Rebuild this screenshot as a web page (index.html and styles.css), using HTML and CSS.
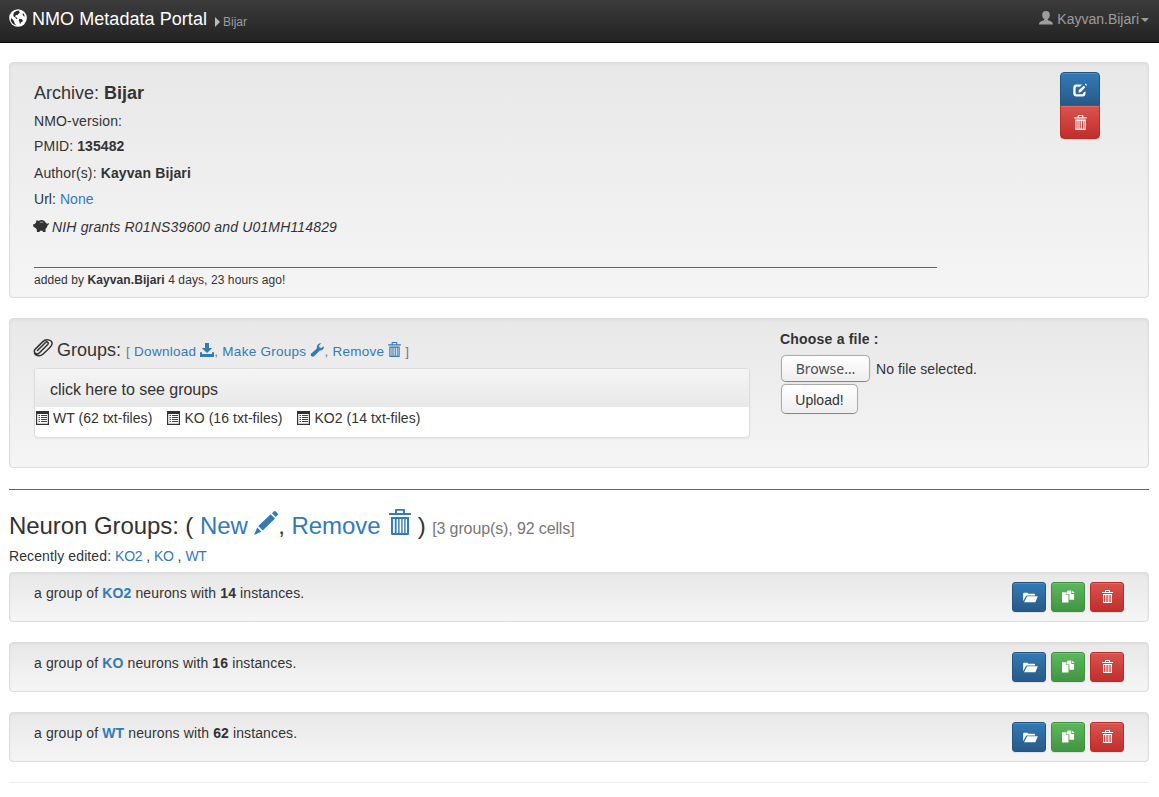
FILE: index.html
```html
<!DOCTYPE html>
<html lang="en">
<head>
<meta charset="utf-8">
<title>NMO Metadata Portal</title>
<link rel="stylesheet" href="styles.css">
</head>
<body>
<svg class="sprite" aria-hidden="true">
  <symbol id="globe" viewBox="0 0 18 18"><circle cx="9" cy="9" r="8.8" fill="#fff"/><path fill="#2c2c2c" d="M10.500 1.500 7.500 2 5 3.500 4.200 6l.6 1.800 1.700.7.600 1.500 1.300-.200-.6-1.300L6.500 8l-.1-1.500L8 5.800l.8.8.4-1.700 1.700-1.200-.8-.9zM2 9l1.500 1.200L5 12l.7 2.500L7.500 16.500 4 15 1.800 12zM10.500 9.800l1.800.1 1.500 1.200-.4 1.600-1.300.6-.7 1.400-.8-.2-.1-1.800-.8-1.100zM14 4l1.300 1.800.4 1.900-1.200-.7-1-1.500z"/></symbol>
  <symbol id="user" viewBox="0 0 14 14"><path d="M7 0C4.400 0 3.200 1.500 3.200 3.900c0 1.900.8 3.300 2 4.100v1.100C3 10.200.2 10.500 0 13.500h14c-.2-3-3-3.300-5.200-4.400V8c1.200-.8 2-2.200 2-4.100C10.800 1.500 9.600 0 7 0z"/></symbol>
  <symbol id="edit" viewBox="0 0 14 14"><path d="M9 1.600H3.300Q.3 1.600.3 4.600v5.900q0 3 3 3h6.200q3 0 3-3V8.200l-2.200 1.600q0 1.500-1.400 1.500H4Q2.600 11.300 2.600 9.900V5.200q0-1.400 1.400-1.400h3z"/><path d="m5.500 9.700.3-2.600 5-4.300 1.500 1.500L8 9.100zM11.700 1.300l.9-.9 1.400 1.400-.6 1.100z"/></symbol>
  <symbol id="trash" viewBox="0 0 22 26"><path fill-rule="evenodd" d="M6 4V1q0-1 1-1h8q1 0 1 1v3h6v2H0V4zm2 0h6V1.800H8zM2 8h18v17q0 1-1 1H3q-1 0-1-1zm2 2v14h1.800V10zm3.600 0v14h1.600V10zm3 0v14h1.600V10zm3 0v14h1.600V10zm3 0v14H18V10z"/></symbol>
  <symbol id="piggy" viewBox="0 0 16 12"><path d="M0 4.500 1.700 4 3 2.500 3.600 0l2 .9C7-.2 10-.2 11.500 1l1.700 2.300 1.300.5 1-.8.500 1-1.500 1.400-.5 1.800-1.500 1.800V12H10l-.5-1.200H7L6.500 12H4l-.3-2.700L2 7.600.5 7z"/><path d="M6.800 2.200h3.400" stroke="#ccc" stroke-width=".7"/></symbol>
  <symbol id="clip" viewBox="0 0 20 18"><path fill="none" stroke="#333" stroke-width="1.500" stroke-linecap="round" d="m4.500 11.500 8-8c1.600-1.500 3.700.4 2.200 2.100l-8.200 8.100c-3 3-7.200-.6-4.200-3.600l7.500-7.500C13-.6 21 .6 18.600 6.200c-.7 1.500-7.200 7.600-8.800 9.100-2.700 2.500-7.200 1.600-8.300-.8"/></symbol>
  <symbol id="download" viewBox="0 0 14 14"><path d="M5 0h4v5h3.300L7 10 1.700 5H5zM0 9.300h2v1.700h10V9.300h2V14H0z"/></symbol>
  <symbol id="wrench" viewBox="0 0 14 14"><path d="M13.700 3.300c.6 2.200-1.200 4.600-3.800 4.200L4.300 13c-2 2-4.600-.5-3.100-2.400l5.700-5.200C6.400 2.300 8.500 0 11.300.3L9 2.500l.4 1.900 2 .6z"/></symbol>
  <symbol id="list" viewBox="0 0 13 14"><path fill="#333" fill-rule="evenodd" d="M0 0h13v14H0zm1.200 3v9.800h10.600V3z"/><path stroke="#444" d="M2.500 4.500H4M5 4.500h6M2.500 6.500H4M5 6.500h6M2.500 8.500H4M5 8.500h6M2.500 10.500H4M5 10.500h6"/></symbol>
  <symbol id="pencil" viewBox="0 0 24 24"><path d="M18 2.300 20 .3q.8-.6 1.500 0l2.200 2.300q.6.8 0 1.500l-2 2zM16.700 3.200l4.400 4.400L8.800 19.500l-4.600-4.400zM3.200 16.500l4.200 4.200L0 24z"/></symbol>
  <symbol id="folder" viewBox="0 0 16 12"><path d="M0 10V1.800Q0 .7 1 .7h3.500l1.200 1.200H12q1 0 1 1.200v.7H4q-.8 0-1.100.7z"/><path d="M4.400 4.700H16l-2.700 6.600H1z"/></symbol>
  <symbol id="copy" viewBox="0 0 14 13"><path d="M0 2h4.200v3H7v8H0zm5-.2L5 2v2h2.400l.6.700V10h5V3.800h-3V0H6.200zM11 0v2.800h2.500zM4.800 2v2.400H7z"/></symbol>
</svg>

<header class="navbar">
  <a class="brand"><svg class="i-globe"><use href="#globe"/></svg><span class="brand-name">NMO Metadata Portal</span><span class="crumb">Bijar</span></a>
  <a class="account"><svg class="i-user"><use href="#user"/></svg><span class="account-name">Kayvan.Bijari</span><span class="caret"></span></a>
</header>

<main class="page">
  <section class="well archive">
    <div class="archive-info">
      <div class="title">Archive: <b>Bijar</b></div>
      <div class="version">NMO-version:</div>
      <div class="pmid">PMID: <b>135482</b></div>
      <div class="author">Author(s): <b>Kayvan Bijari</b></div>
      <div class="url">Url: <a>None</a></div>
      <div class="grant"><svg class="i-piggy"><use href="#piggy"/></svg><i>NIH grants R01NS39600 and U01MH114829</i></div>
      <div class="added">added by <b>Kayvan.Bijari</b> 4 days, 23 hours ago!</div>
    </div>
    <div class="btn-stack">
      <button class="btn primary"><svg class="i-edit"><use href="#edit"/></svg></button>
      <button class="btn danger"><svg class="i-trash"><use href="#trash"/></svg></button>
    </div>
  </section>

  <section class="well groups">
    <div class="groups-main">
      <div class="groups-head">
        <svg class="i-clip"><use href="#clip"/></svg><span class="groups-title">Groups:</span>
        <small>[ <a>Download <svg class="i-dl"><use href="#download"/></svg></a>, <a>Make Groups <svg class="i-dl"><use href="#wrench"/></svg></a>, <a>Remove <svg class="i-tr"><use href="#trash"/></svg></a> ]</small>
      </div>
      <div class="panel">
        <div class="panel-head">click here to see groups</div>
        <div class="panel-body">
          <span><svg class="i-list"><use href="#list"/></svg>WT (62 txt-files)</span>
          <span><svg class="i-list"><use href="#list"/></svg>KO (16 txt-files)</span>
          <span><svg class="i-list"><use href="#list"/></svg>KO2 (14 txt-files)</span>
        </div>
      </div>
    </div>
    <form class="upload">
      <label>Choose a file :</label>
      <div class="file"><button type="button" class="native browse">Browse…</button><span>No file selected.</span></div>
      <button type="button" class="native send">Upload!</button>
    </form>
  </section>

  <hr class="rule">
  <h3 class="heading">Neuron Groups: ( <a>New <svg class="i-pencil"><use href="#pencil"/></svg></a>, <a>Remove <svg class="i-bigtrash"><use href="#trash"/></svg></a> ) <small>[3 group(s), 92 cells]</small></h3>
  <div class="recent"><span>Recently edited:</span> <a>KO2</a> , <a>KO</a> , <a>WT</a></div>

  <section class="well row">
    <span>a group of <a><b>KO2</b></a> neurons with <b>14</b> instances.</span>
    <div class="actions"><button class="btn primary"><svg class="i-folder"><use href="#folder"/></svg></button><button class="btn success"><svg class="i-copy"><use href="#copy"/></svg></button><button class="btn danger"><svg class="i-smtrash"><use href="#trash"/></svg></button></div>
  </section>
  <section class="well row">
    <span>a group of <a><b>KO</b></a> neurons with <b>16</b> instances.</span>
    <div class="actions"><button class="btn primary"><svg class="i-folder"><use href="#folder"/></svg></button><button class="btn success"><svg class="i-copy"><use href="#copy"/></svg></button><button class="btn danger"><svg class="i-smtrash"><use href="#trash"/></svg></button></div>
  </section>
  <section class="well row">
    <span>a group of <a><b>WT</b></a> neurons with <b>62</b> instances.</span>
    <div class="actions"><button class="btn primary"><svg class="i-folder"><use href="#folder"/></svg></button><button class="btn success"><svg class="i-copy"><use href="#copy"/></svg></button><button class="btn danger"><svg class="i-smtrash"><use href="#trash"/></svg></button></div>
  </section>
  <hr class="end">
</main>
</body>
</html>
```
FILE: styles.css
```css
* { box-sizing: border-box; }
body { margin: 0; background: #fff; color: #333; font: 14px/20px "Liberation Sans", Arial, sans-serif; }
a { color: #337ab7; text-decoration: none; }
svg { fill: currentColor; flex: none; }
.sprite { position: absolute; width: 0; height: 0; }

.navbar { display: flex; justify-content: space-between; height: 43px; padding: 0 10px 0 9px; background: linear-gradient(#3c3c3c, #222); border-bottom: 1px solid #080808; }
.brand, .account { display: flex; height: 38px; align-items: center; }
.i-globe { width: 18px; height: 18px; margin: -3px 5px 0 0; }
.brand-name { color: #fff; font-size: 18px; letter-spacing: .05px; }
.crumb { display: flex; align-items: center; margin: 5px 0 0 8px; color: #9d9d9d; font-size: 12px; }
.crumb::before { content: ""; margin-right: 3px; border: 5px solid transparent; border-left: 5px solid #bbb; border-right: 0; }
.account { color: #9d9d9d; }
.i-user { width: 14px; height: 14px; margin: -2px 4px 0 0; }
.account-name { font-size: 14px; }
.caret { margin: 2px 0 0 2px; border: 4px solid transparent; border-top-color: #9d9d9d; border-bottom: 0; }

.page { padding: 19px 10px 0 9px; }
.well { display: flex; margin-bottom: 20px; border: 1px solid #dcdcdc; border-radius: 4px; background: linear-gradient(#e8e8e8, #f5f5f5); box-shadow: inset 0 1px 3px rgba(0,0,0,.05), 0 1px 0 rgba(255,255,255,.1); }
.archive { height: 236px; padding: 17px 48px 0 24px; justify-content: space-between; }
.archive-info { width: 903px; }
.title { font-size: 18px; line-height: 26px; height: 28px; }
.version { height: 25px; line-height: 27px; letter-spacing: .15px; }
.pmid { line-height: 26px; letter-spacing: .07px; }
.author { height: 27px; line-height: 28px; letter-spacing: .12px; }
.url { line-height: 26px; letter-spacing: .05px; }
.grant { display: flex; align-items: center; height: 30px; letter-spacing: .16px; }
.i-piggy { width: 16px; height: 12px; margin: -2px 3px 0 -1px; }
.added { margin-top: 25px; border-top: 1px solid #666; font-size: 12px; line-height: 24px; letter-spacing: .09px; }

.btn { display: flex; align-items: center; justify-content: center; width: 34px; height: 30px; padding: 0; border: 1px solid; border-radius: 3px; color: #fff; box-shadow: inset 0 1px 0 rgba(255,255,255,.15), 0 1px 1px rgba(0,0,0,.075); }
.primary { background: linear-gradient(#337ab7, #265a88); border-color: #245580; }
.success { background: linear-gradient(#5cb85c, #419641); border-color: #3e8f3e; }
.danger { background: linear-gradient(#d9534f, #c12e2a); border-color: #b92c28; }
.btn-stack { margin-top: -8px; }
.btn-stack .btn { width: 40px; height: 34px; border-radius: 4px 4px 0 0; }
.btn-stack .btn + .btn { margin-top: -1px; border-radius: 0 0 4px 4px; }
.i-edit { width: 14px; height: 14px; margin-top: 2px; }
.i-trash { width: 13px; height: 15px; }

.groups { height: 150px; padding-left: 24px; }
.groups-main { width: 716px; margin-right: 30px; }
.groups-head { display: flex; height: 49px; padding-top: 21px; color: #333; }
.i-clip { width: 20px; height: 18px; margin: -1px 4px 0 -1px; }
.groups-title { font-size: 18px; margin-right: 5px; }
.groups-head small { padding-top: 2px; color: #777; font-size: 13.5px; letter-spacing: .27px; white-space: nowrap; }
.i-dl { width: 14px; height: 14px; vertical-align: -1px; }
.i-tr { width: 13px; height: 15px; vertical-align: -1px; }
.panel { height: 70px; border: 1px solid #ddd; border-radius: 4px; overflow: hidden; background: #fff; box-shadow: 0 1px 2px rgba(0,0,0,.05); }
.panel-head { height: 38px; padding-left: 15px; background: linear-gradient(#f5f5f5, #e8e8e8); font-size: 16px; line-height: 42px; letter-spacing: -.04px; }
.panel-body { display: flex; gap: 15px; height: 22px; padding-left: 1px; align-items: center; letter-spacing: .05px; }
.panel-body span { display: flex; align-items: center; }
.i-list { width: 13px; height: 14px; margin: -1px 4px 0 0; }
.upload { padding-top: 10px; }
.upload label { display: block; font-weight: bold; letter-spacing: .2px; }
.file { display: flex; align-items: center; gap: 6px; margin: 5px 0 2px 1px; height: 28px; }
.file span { padding-top: 2px; letter-spacing: .08px; }
.native { border: 1px solid #aaa; border-bottom-color: #888; border-radius: 5px; background: linear-gradient(#fff, #eee); padding: 0; color: #333; box-shadow: 0 0 1px rgba(0,0,0,.2); }
.browse { width: 89px; height: 27px; color: #4c4c4c; font: 14px "Noto Sans", sans-serif; }
.send { display: block; width: 77px; height: 30px; margin-left: 1px; padding-top: 2px; font: 14px "Liberation Sans", Arial, sans-serif; }

.rule { height: 1px; margin: 21px 0 0; border: 0; background: #666; }
.heading { height: 56px; margin: 0; padding-top: 19px; font-size: 24px; line-height: 30px; font-weight: normal; white-space: nowrap; letter-spacing: -.07px; }
.heading small { color: #777; font-size: 16px; letter-spacing: -.12px; }
.i-pencil { width: 24px; height: 24px; vertical-align: -1px; }
.i-bigtrash { width: 22px; height: 26px; margin-left: 2px; vertical-align: -1px; }
.recent { height: 26px; }
.recent span { letter-spacing: .11px; }
.recent a { letter-spacing: -.25px; }
.row { height: 50px; padding: 9px 24px; justify-content: space-between; }
.row > span { line-height: 22px; letter-spacing: .12px; }
.actions { display: flex; gap: 5px; }
.i-folder { width: 15px; height: 11px; margin-left: 3px; }
.i-copy { width: 13px; height: 13px; margin-top: -1px; }
.i-smtrash { width: 11px; height: 13px; margin-top: -1px; }
.end { height: 1px; margin: 20px 0 0; border: 0; background: #eee; }
```
